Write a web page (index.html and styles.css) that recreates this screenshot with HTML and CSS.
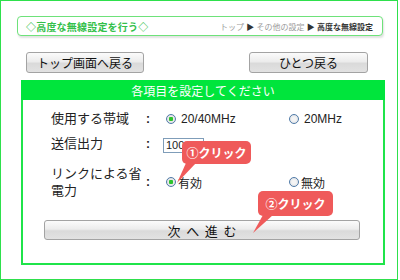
FILE: index.html
```html
<!DOCTYPE html>
<html lang="ja">
<head>
<meta charset="utf-8">
<link rel="stylesheet" href="styles.css">
</head>
<body>
<div class="frame">
  <div class="crumb">
    <span class="crumb-title">◇高度な無線設定を行う◇</span>
    <span class="crumb-path">トップ <b>▶</b> その他の設定 <b>▶ 高度な無線設定</b></span>
  </div>
  <div class="nav">
    <div class="btn btn-top">トップ画面へ戻る</div>
    <div class="btn btn-back">ひとつ戻る</div>
  </div>
  <div class="panel">
    <div class="panel-head">各項目を設定してください</div>
    <div class="rows">
      <div class="row r1">
        <div class="label">使用する帯域</div>
        <div class="colon">:</div>
        <div class="value">
          <span class="opt w123"><span class="radio on"></span><span class="otext g6">20/40MHz</span></span>
          <span class="opt"><span class="radio"></span><span class="otext g6">20MHz</span></span>
        </div>
      </div>
      <div class="row r2">
        <div class="label">送信出力</div>
        <div class="colon">:</div>
        <div class="value shift">
          <span class="input">100</span>
        </div>
      </div>
      <div class="row r3">
        <div class="label">リンクによる省<br>電力</div>
        <div class="colon">:</div>
        <div class="value">
          <span class="opt w123"><span class="radio on"></span><span class="otext g3">有効</span></span>
          <span class="opt"><span class="radio"></span><span class="otext g3">無効</span></span>
        </div>
      </div>
      <div class="btn btn-next">次 へ 進 む</div>
    </div>
  </div>
  <div class="callout c1">①クリック<svg class="tail" width="30" height="30" viewBox="0 0 30 30"><polygon points="9,0 19,0 0,20" fill="#ef5a5a"/></svg></div>
  <div class="callout c2">②クリック<svg class="tail" width="30" height="30" viewBox="0 0 30 30"><polygon points="10,0 20,0 0,18" fill="#ef5a5a"/></svg></div>
</div>
</body>
</html>
```
FILE: styles.css
```css
html, body {
  margin: 0;
  padding: 0;
  background: #ffffff;
}
body {
  font-family: "Liberation Sans", "Noto Sans CJK JP", sans-serif;
  color: #222;
}
.frame {
  position: relative;
  width: 398px;
  height: 280px;
  box-sizing: border-box;
  border: 1px solid #2ee04c;
  padding-top: 15px;
}
.crumb {
  margin-left: 16px;
  width: 366px;
  height: 20px;
  box-sizing: border-box;
  border: 1px solid #6ee27a;
  border-radius: 4px;
  box-shadow: 1px 2px 2px #e2e2e2;
  display: flex;
  justify-content: space-between;
  align-items: center;
  padding: 0 9px 0 8px;
  background: #fff;
}
.crumb-title {
  font-size: 10px;
  color: #33c04a;
  font-weight: bold;
  letter-spacing: 0.2px;
}
.crumb-path {
  font-size: 8px;
  color: #9a9a9a;
}
.crumb-path b {
  color: #333;
  font-weight: bold;
}
.nav {
  display: flex;
  justify-content: space-between;
  margin: 16px 29px 0 25px;
}
.btn {
  height: 21px;
  box-sizing: border-box;
  border: 1px solid #a3a3a3;
  border-radius: 3px;
  background: linear-gradient(#fbfbfb 0%, #ececec 45%, #dadada 55%, #e2e2e2 100%);
  display: flex;
  align-items: center;
  justify-content: center;
  font-size: 12px;
  color: #111;
}
.btn-top { width: 118px; }
.btn-back { width: 119px; }
.panel {
  margin: 7px 0 0 20px;
  width: 364px;
  height: 185px;
  box-sizing: border-box;
  border: 2px solid #1fe44a;
  border-top: none;
}
.panel-head {
  height: 20px;
  background: #00e53c;
  color: #fff;
  font-size: 12px;
  display: flex;
  align-items: center;
  justify-content: center;
  margin: 0 -2px;
}
.rows {
  padding: 6px 0 0 28px;
  display: flex;
  flex-direction: column;
}
.row {
  display: flex;
  align-items: center;
  font-size: 13px;
}
.r1, .r2 { height: 25px; }
.r3 { height: 34px; margin-top: 9px; }
.label {
  width: 95px;
  line-height: 17px;
  color: #222;
}
.colon {
  width: 20px;
  font-weight: bold;
  font-size: 12px;
}
.value {
  display: flex;
  align-items: center;
  font-size: 12px;
}
.value.shift { margin-left: -3px; padding-top: 3px; }
.opt {
  display: flex;
  align-items: center;
}
.w123 { width: 123px; }
.radio {
  width: 10px;
  height: 10px;
  box-sizing: border-box;
  border-radius: 50%;
  border: 1px solid #4f7aa7;
  background: radial-gradient(circle, #f4f4f4 30%, #d9dde2 100%);
  display: inline-block;
}
.radio.on {
  background: radial-gradient(circle, #2cc42c 0, #2cc42c 2px, #eaeaea 2.5px, #d6dadf 100%);
}
.g6 { margin-left: 5px; }
.g3 { margin-left: 2px; }
.otext { color: #222; }
.input {
  width: 41px;
  height: 15px;
  box-sizing: border-box;
  border: 1px solid #7f9db9;
  font-size: 11px;
  line-height: 13px;
  padding-left: 2px;
  overflow: hidden;
  white-space: nowrap;
  background: #fff;
}
.btn-next {
  margin: 21px 0 0 -7px;
  width: 316px;
  height: 20px;
  font-size: 13px;
  word-spacing: 2px;
}
.callout {
  position: absolute;
  background: #ef5a5a;
  color: #fff;
  font-size: 12px;
  font-weight: bold;
  border-radius: 5px;
  display: flex;
  align-items: center;
  justify-content: center;
}
.c1 { left: 181px; top: 140px; width: 69px; height: 23px; }
.c2 { left: 257px; top: 190px; width: 75px; height: 25px; }
.tail {
  position: absolute;
  overflow: visible;
}
.c1 .tail { left: -5px; top: 22px; }
.c2 .tail { left: -5px; top: 24px; }
```
